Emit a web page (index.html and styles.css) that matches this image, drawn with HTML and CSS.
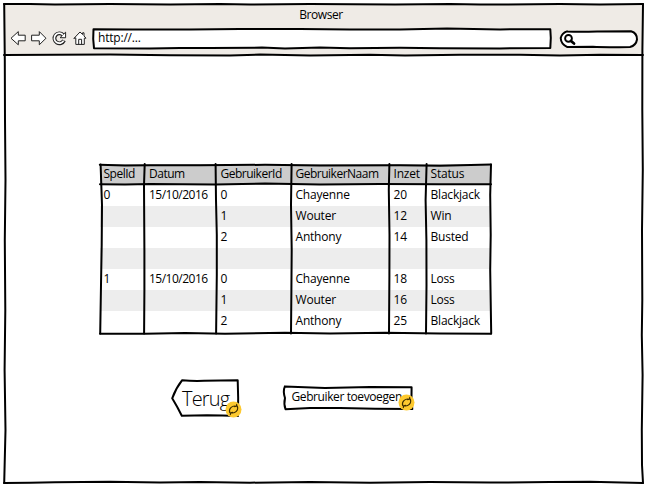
FILE: index.html
```html
<!DOCTYPE html>
<html lang="nl">
<head>
<meta charset="utf-8">
<title>Browser</title>
<link rel="stylesheet" href="styles.css">
</head>
<body>
<div class="window">
  <header class="chrome">
    <div class="title">Browser</div>
    <div class="toolbar">
      <svg class="nav" viewBox="10 29 80 18" aria-hidden="true">
        <path class="icon" d="M11.3 38 L18.3 31.6 V35.2 H25.2 V40.8 H18.3 V44.4 Z"/>
        <path class="icon" d="M45.7 38 L39.3 31.6 V35.2 H31.6 V40.8 H39.3 V44.4 Z"/>
        <path class="reload-edge" d="M63 34.8 A5 5 0 1 0 64 40.4"/>
        <path class="icon" d="M60.3 37.4 L65.6 32.2 V37.4 Z"/>
        <path class="reload-core" d="M63 34.8 A5 5 0 1 0 63.7 40.6"/>
        <path class="icon" d="M74.1 38.2 L80 32 L82.6 34.5 V32.8 H84 V36 L86 38.2 H84.3 V44.4 H75.8 V38.2 Z M78.7 44.2 V39.3 H81.6 V44.2"/>
      </svg>
      <div class="address">
        <svg class="ink" viewBox="93 28 458 21" aria-hidden="true"><path class="fill" d="M93.5 29.2 L132 29.6 L190 29.4 L240 29 L300 29 L350 29.5 L400 29.4 L447 28.6 L500 29.4 L550.3 29.2 L550.8 38 L550.3 48 L500 48.4 L440 48.2 L400 47.8 L350 48.3 L320 47.6 L285 48.4 L262 47.6 L210 48.1 L180 47.9 L150 48.6 L94 48.2 L93.2 39 Z"/></svg>
        <span>http://...</span>
      </div>
      <div class="search">
        <svg class="ink" viewBox="560 30 78 18" aria-hidden="true"><path class="fill" d="M567 31.4 Q580 32.1 597 31.4 L631 31.3 Q637.2 33.2 637 39.5 Q636 45.6 630 46.9 Q605 47.5 593 46.8 L567 46.9 Q561 44 560.7 38 Q562 33 567 31.4"/><circle class="glass" cx="568.5" cy="38.4" r="3.4"/><path class="handle" d="M571 41 L574 43.5"/></svg>
      </div>
    </div>
  </header>
  <main class="page">
    <div class="games">
      <table>
        <colgroup><col class="c1"><col class="c2"><col class="c3"><col class="c4"><col class="c5"><col class="c6"></colgroup>
        <thead><tr><th>SpelId</th><th>Datum</th><th>GebruikerId</th><th>GebruikerNaam</th><th>Inzet</th><th>Status</th></tr></thead>
        <tbody>
          <tr><td>0</td><td>15/10/2016</td><td>0</td><td>Chayenne</td><td>20</td><td>Blackjack</td></tr>
          <tr><td></td><td></td><td>1</td><td>Wouter</td><td>12</td><td>Win</td></tr>
          <tr><td></td><td></td><td>2</td><td>Anthony</td><td>14</td><td>Busted</td></tr>
          <tr><td></td><td></td><td></td><td></td><td></td><td></td></tr>
          <tr><td>1</td><td>15/10/2016</td><td>0</td><td>Chayenne</td><td>18</td><td>Loss</td></tr>
          <tr><td></td><td></td><td>1</td><td>Wouter</td><td>16</td><td>Loss</td></tr>
          <tr><td></td><td></td><td>2</td><td>Anthony</td><td>25</td><td>Blackjack</td></tr>
        </tbody>
      </table>
      <svg class="ink" viewBox="100 164 391 170" aria-hidden="true">
        <path d="M99.8 164.7 L125 165.5 L150 165.2 L200 165.3 L265 164.8 L320 165.5 L400 165.2 L440 165.8 L491 164.6"/>
        <path d="M100 184.2 L125 184.5 L150 184 L215 184.4 L265 183.6 L320 184.5 L380 183.9 L440 184.2 L491 184.2"/>
        <path d="M100.6 164.5 L102 205 L101.7 245 L101 285 L100.2 333.5"/>
        <path d="M144.7 164 L144 185 L144.4 250 L144.4 290 L144.1 333.5"/>
        <path d="M215.6 164 L216 200 L216.8 235 L216.8 275 L216.1 333.5"/>
        <path d="M291.6 164 L291 205 L291.7 250 L291.4 290 L291 333.5"/>
        <path d="M389.4 164 L388.8 190 L389.5 235 L389.4 275 L389 333.5"/>
        <path d="M426.6 164 L425.6 200 L426.4 240 L426.5 285 L426 333.5"/>
        <path d="M491 164.5 L490.2 195 L490.7 235 L490.2 270 L491.2 333.5"/>
        <path d="M100 333.8 L145 333.8 L185 333 L225 333.7 L285 332.8 L330 333.6 L385 332.8 L440 333.6 L491 333.8"/>
      </svg>
    </div>
    <div class="actions">
      <div class="back">
        <svg class="ink" viewBox="171 379 69 38" aria-hidden="true"><path class="fill" d="M182.2 380.2 Q192 381.2 204 380.8 L237.7 380.3 Q238.5 398 238 415.9 Q222 415.5 207 415.3 L181.8 415.8 Q177.5 407 172.2 398.3 Q176 388 182.2 380.2"/></svg>
        <span>Terug</span>
        <svg class="badge" viewBox="0 0 17 17" aria-hidden="true"><circle cx="8.5" cy="8.5" r="8"/><path d="M4.8 11.8 C3.2 7.7 7.2 4.2 11.2 5.2 M11.7 3.4 L11.4 5.3 L9.6 5.6 M12.3 5 C13.9 9.2 10.2 12.9 6 11.8 M5.3 13.7 L5.7 11.8 L7.5 11.2"/></svg>
      </div>
      <div class="add">
        <svg class="ink" viewBox="283 386 130 24" aria-hidden="true"><path class="fill" d="M284.8 386.6 L325 388 L370 387 L411.6 387.3 Q411 398 412.3 409 L375 408.7 L340 407.9 L310 408 L285.5 409.2 Q283.6 404 285 398 Q282.8 391 284.8 386.6"/></svg>
        <span>Gebruiker toevoegen</span>
        <svg class="badge" viewBox="0 0 17 17" aria-hidden="true"><circle cx="8.5" cy="8.5" r="8"/><path d="M4.8 11.8 C3.2 7.7 7.2 4.2 11.2 5.2 M11.7 3.4 L11.4 5.3 L9.6 5.6 M12.3 5 C13.9 9.2 10.2 12.9 6 11.8 M5.3 13.7 L5.7 11.8 L7.5 11.2"/></svg>
      </div>
    </div>
  </main>
  <svg class="ink" viewBox="4 4 638 479" aria-hidden="true">
    <path d="M4 4 L30 4 L55 4.5 L110 4 L170 4.4 L220 4 L250 4.6 L310 4 L395 4.6 L450 4.1 L480 4.6 L560 4.1 L600 4.6 L643 4.1"/>
    <path d="M4.2 4 L4.8 60 L5 120 L5.5 180 L4.8 240 L5.3 310 L4.6 370 L5.5 430 L4.2 483"/>
    <path d="M643 4 L642.4 50 L642.3 110 L642.8 170 L642 230 L642.3 300 L641.8 335 L642.6 375 L641.8 430 L642 465 L643 483"/>
    <path d="M4 55 L55 54.8 L110 54.6 L170 55.3 L230 55.4 L260 54.6 L310 55.5 L370 54.7 L405 55.4 L460 54.7 L520 54.8 L560 55.4 L600 54.7 L643 55"/>
    <path d="M4 483 L30 482.8 L55 482.3 L110 481.8 L160 482.6 L200 482 L250 482.7 L310 481.9 L370 482.7 L430 482 L490 482.6 L550 482 L590 481.8 L643 483"/>
  </svg>
</div>
</body>
</html>
```

FILE: styles.css
```css
body {
  margin: 0;
  background: #fff;
  color: #000;
  font: 12px/16px "Open Sans", "Noto Sans", sans-serif;
  letter-spacing: -0.2px;
}

svg {
  display: block;
  fill: none;
  stroke: #000;
  stroke-width: 2;
  stroke-linecap: round;
  stroke-linejoin: round;
}

.ink {
  position: absolute;
  inset: 0;
  width: 100%;
  height: 100%;
  overflow: visible;
  pointer-events: none;
}

.fill { fill: #fff; }

.window {
  position: relative;
  width: 638px;
  height: 479px;
  margin: 4px;
}

.chrome {
  height: 51px;
  background: #efebe6;
}

.title {
  height: 24px;
  padding-top: 3px;
  box-sizing: border-box;
  padding-right: 4px;
  text-align: center;
  letter-spacing: -0.4px;
}

.toolbar {
  display: flex;
  align-items: flex-start;
  padding-left: 6px;
}

.nav {
  width: 80px;
  height: 18px;
  margin-top: 1px;
}

.icon {
  fill: #fff;
  stroke: #222;
  stroke-width: 1;
}

.reload-edge { stroke: #222; stroke-width: 3.8; stroke-linecap: butt; }
.reload-core { stroke: #fff; stroke-width: 1.7; stroke-linecap: butt; }

.address,
.search,
.games,
.back,
.add {
  position: relative;
}

.address {
  width: 458px;
  height: 21px;
  margin-left: 3px;
}

.address span {
  position: relative;
  display: block;
  padding: 2px 0 0 5px;
  letter-spacing: -0.2px;
}

.search {
  width: 78px;
  height: 18px;
  margin: 2px 0 0 9px;
}

.glass { stroke-width: 1.9; }
.handle { stroke-width: 2.8; }

.page {
  padding: 109px 0 0 96px;
}

.games {
  width: 391px;
  height: 170px;
}

table {
  width: 391px;
  table-layout: fixed;
  border-collapse: collapse;
}

.c1 { width: 44px; }
.c2 { width: 72px; }
.c3 { width: 75px; }
.c4 { width: 98px; }
.c5 { width: 37px; }
.c6 { width: 65px; }

th,
td {
  height: 21px;
  padding: 0 0 2px 4.5px;
  box-sizing: border-box;
  font-weight: 400;
  line-height: 16px;
  text-align: left;
  white-space: nowrap;
}

th {
  background: #ccc;
  letter-spacing: -0.5px;
}

th:first-child,
td:first-child { padding-left: 3.5px; }

td:nth-child(2) { letter-spacing: -0.5px; }

th:nth-child(2),
td:nth-child(2) { padding-left: 5px; }

th:nth-child(5),
th:nth-child(6) { letter-spacing: -0.2px; }

tbody tr:nth-child(even) { background: #ededed; }

.actions {
  display: flex;
  align-items: flex-start;
  padding: 45px 0 0 71px;
}

.back {
  width: 69px;
  height: 38px;
  font-size: 20px;
  font-weight: 300;
  line-height: 28px;
  letter-spacing: -0.8px;
}

.back span {
  position: relative;
  display: block;
  padding: 6px 0 0 11px;
}

.add {
  width: 130px;
  height: 24px;
  margin: 7px 0 0 43px;
  letter-spacing: -0.4px;
}

.add span {
  position: relative;
  display: block;
  padding: 3px 0 0 8.5px;
  white-space: nowrap;
}

.badge {
  position: absolute;
  right: -2px;
  bottom: -1px;
  width: 17px;
  height: 17px;
  stroke: #3c2c00;
  stroke-width: 1.1;
}

.badge circle {
  fill: #fdc92f;
  stroke: none;
}
```
